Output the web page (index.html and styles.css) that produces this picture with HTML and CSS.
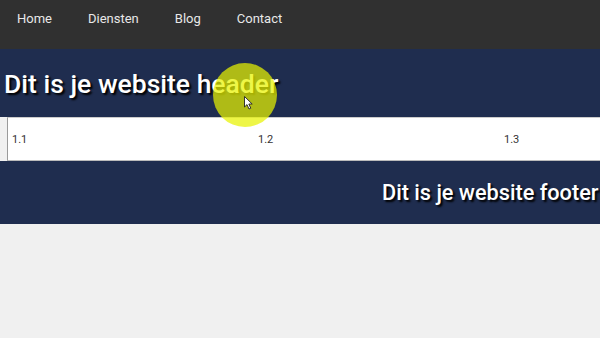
FILE: index.html
```html
<!DOCTYPE html>
<html lang="nl">
<head>
<meta charset="utf-8">
<link rel="stylesheet" href="styles.css">
</head>
<body>
<nav class="nav">
  <a href="#">Home</a>
  <a href="#">Diensten</a>
  <a href="#">Blog</a>
  <a href="#">Contact</a>
</nav>
<header class="header">
  <h1>Dit is je website header</h1>
</header>
<section class="row">
  <div class="col">1.1</div>
  <div class="col">1.2</div>
  <div class="col">1.3</div>
</section>
<footer class="footer">
  <h2>Dit is je website footer</h2>
</footer>
<div class="cursor">
  <div class="spot"></div>
  <svg class="arrow" width="10" height="14" viewBox="0 0 10 14"><path d="M0.5 0.5 L0.5 11 L3 8.6 L5 13 L6.8 12.2 L4.8 8 L8.2 8 Z" fill="#fff" stroke="#222" stroke-width="0.9" stroke-linejoin="round"/></svg>
</div>
</body>
</html>
```
FILE: styles.css
```css
html, body {
  margin: 0;
  padding: 0;
}
body {
  background: #f0f0f0;
  font-family: Roboto, "Noto Sans", sans-serif;
  width: 600px;
  height: 338px;
  overflow: hidden;
  position: relative;
}
.nav {
  background: #303030;
  height: 49px;
  display: flex;
  padding-left: 17px;
  box-sizing: border-box;
  padding-top: 10px;
}
.nav a {
  color: #e8e8e8;
  text-decoration: none;
  font-size: 13px;
  line-height: 17px;
  margin-right: 36px;
}
.header {
  background: #1f2d4f;
  height: 68px;
  display: flex;
  align-items: center;
  padding-left: 4px;
}
.header h1 {
  margin: 0;
  color: #fff;
  font-size: 26.5px;
  font-weight: 500;
  text-shadow: 2px 2px 2px #000;
  white-space: nowrap;
}
.row {
  display: flex;
  margin-left: 7px;
  width: 593px;
  overflow: hidden;
  height: 44px;
  box-sizing: border-box;
  background: #fff;
  border-left: 1px solid #9a9a9a;
  border-top: 1px solid #ccc;
  border-bottom: 1px solid #bbb;
}
.col {
  flex: 0 0 246px;
  padding-left: 4px;
  font-size: 11px;
  color: #333;
  display: flex;
  align-items: center;
  box-sizing: border-box;
}
.footer {
  background: #1f2d4f;
  height: 63px;
  display: flex;
  align-items: center;
  padding-left: 382px;
  overflow: hidden;
}
.footer h2 {
  margin: 0;
  color: #fff;
  font-size: 21.7px;
  font-weight: 500;
  text-shadow: 2px 2px 2px #000;
  white-space: nowrap;
}
.cursor {
  position: absolute;
  left: 213px;
  top: 63px;
  width: 64px;
  height: 64px;
}
.spot {
  width: 64px;
  height: 64px;
  border-radius: 50%;
  background: rgba(232, 242, 0, 0.72);
}
.arrow {
  position: absolute;
  left: 31px;
  top: 33px;
}
```
